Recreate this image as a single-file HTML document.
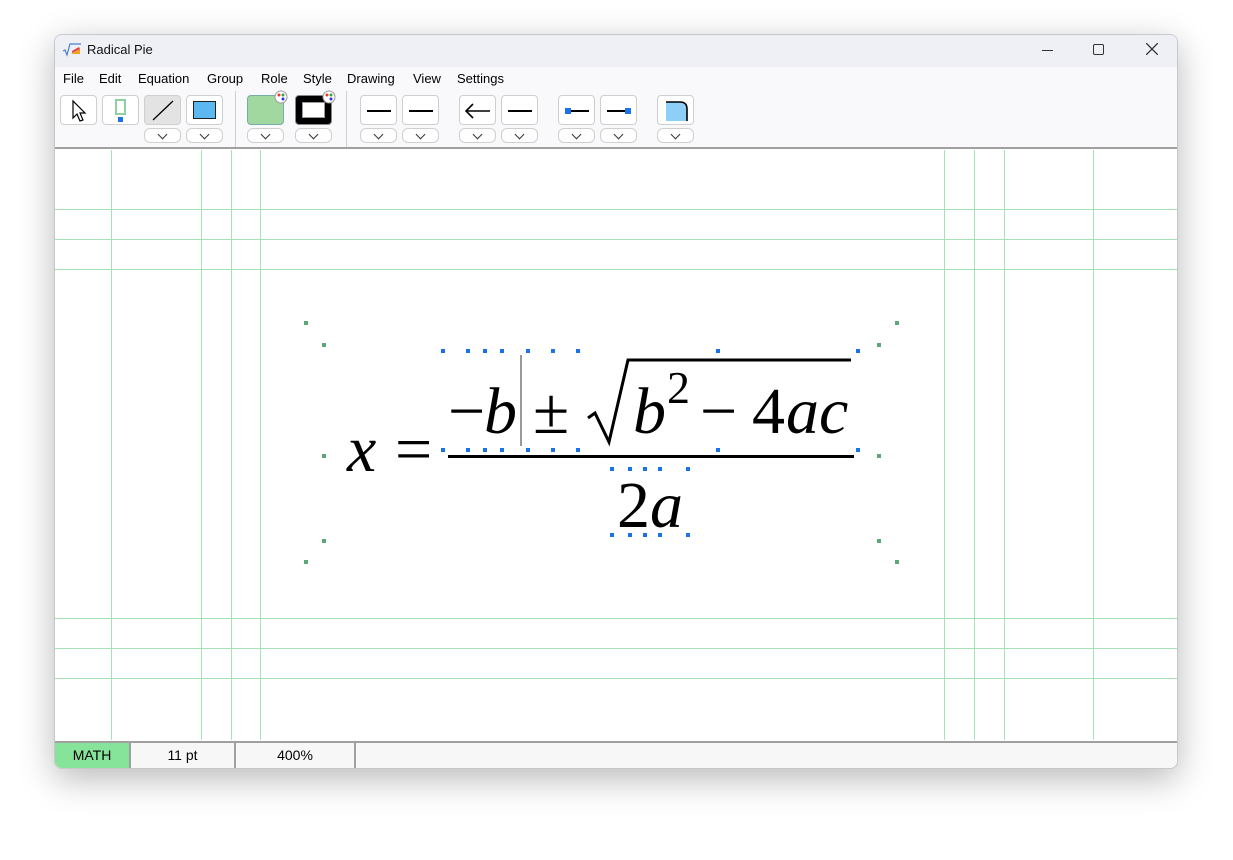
<!DOCTYPE html>
<html><head><meta charset="utf-8"><style>
*{margin:0;padding:0;box-sizing:border-box}
body{width:1233px;height:860px;background:#fff;position:relative;overflow:hidden;font-family:"Liberation Sans",sans-serif}
.win{position:absolute;left:54px;top:34px;width:1124px;height:735px;border:1px solid #c8c8c8;border-radius:8px;background:#fff;box-shadow:0 10px 35px rgba(0,0,0,.28);overflow:hidden}
.title{position:absolute;left:0;top:0;width:100%;height:32px;background:#eff0f6}
.menu{position:absolute;left:0;top:32px;width:100%;height:22px;background:#f9f9fb;font-size:13px}
.menu span{position:absolute;top:4px}
.tb{position:absolute;left:0;top:54px;width:100%;height:60px;background:#f9f9fb;border-bottom:2px solid #a0a0a0}
.b{position:absolute;top:6px;width:37px;height:30px;border:1px solid #cfcfcf;border-radius:4px;background:#fff}
.d{position:absolute;top:39px;width:37px;height:15px;border:1px solid #cfcfcf;border-radius:6px;background:#fff}
.d:after{content:"";position:absolute;left:14px;top:2px;width:6px;height:6px;border-right:1px solid #333;border-bottom:1px solid #333;transform:rotate(45deg)}
.sep{position:absolute;top:2px;width:1px;height:56px;background:#d0d0d0}
.status{position:absolute;left:0;top:706px;width:100%;height:28px;background:#f7f7f7;border-top:2px solid #a0a0a0;font-size:14px}
.status div{position:absolute;top:0;height:26px;line-height:25px;text-align:center;border-right:2px solid #a0a0a0}
</style></head><body>
<div class="win">
 <div class="title">
  <svg style="position:absolute;left:8px;top:8px" width="18" height="14"><path d="M0 8 L2 7 L4 12 L7 1 L18 1" stroke="#4a7fd0" fill="none" stroke-width="1.2"/><path d="M8 11 L17 6 L17 11 Z" fill="#f0a020"/><path d="M9 8 L16 4 L17 6 L9 10Z" fill="#e04040"/></svg>
  <span style="position:absolute;left:32px;top:7px;font-size:13px;color:#111">Radical Pie</span>
  <div style="position:absolute;left:987px;top:15px;width:11px;height:1px;background:#333"></div>
  <div style="position:absolute;left:1038px;top:9px;width:11px;height:11px;border:1.3px solid #333;border-radius:2px"></div>
  <svg style="position:absolute;left:1091px;top:8px" width="12" height="12"><path d="M0 0L12 12M12 0L0 12" stroke="#333" stroke-width="1.3"/></svg>
 </div>
 <div class="menu">
  <span style="left:8px">File</span><span style="left:44px">Edit</span><span style="left:83px">Equation</span><span style="left:152px">Group</span><span style="left:206px">Role</span><span style="left:248px">Style</span><span style="left:292px">Drawing</span><span style="left:358px">View</span><span style="left:402px">Settings</span>
 </div>
 <div class="tb">
  <div class="b" style="left:5px"><svg width="37" height="30"><path d="M12 5 L12 22 L16 18 L19 25 L22 24 L19 17 L24 17 Z" fill="#fff" stroke="#000" stroke-width="1.2"/></svg></div>
  <div class="b" style="left:47px"><div style="position:absolute;left:12px;top:3px;width:11px;height:16px;border:2px solid #8fd0a0"></div><div style="position:absolute;left:15px;top:21px;width:5px;height:5px;background:#1a73e8"></div></div>
  <div class="b" style="left:89px;background:#e3e3e3"><svg width="37" height="30"><path d="M8 24 L28 5" stroke="#000" stroke-width="1.3"/></svg></div>
  <div class="b" style="left:131px"><div style="position:absolute;left:6px;top:5px;width:23px;height:18px;background:#5bb8f0;border:1.5px solid #222"></div></div>
  <div class="d" style="left:89px"></div><div class="d" style="left:131px"></div>
  <div class="sep" style="left:180px"></div>
  <div class="b" style="left:192px;background:#a0d8a0;border-color:#7aa"></div>
  <div class="b" style="left:240px;background:#000;border-color:#888"><div style="position:absolute;left:6px;top:6px;width:23px;height:16px;background:#fff;border:1px solid #999"></div></div>
  <svg style="position:absolute;left:219px;top:1px" width="14" height="14"><circle cx="7" cy="7" r="6" fill="#fff" stroke="#999"/><circle cx="5" cy="5" r="1.5" fill="#e33"/><circle cx="9" cy="5" r="1.5" fill="#3a3"/><circle cx="9" cy="9" r="1.5" fill="#33e"/></svg>
  <svg style="position:absolute;left:267px;top:1px" width="14" height="14"><circle cx="7" cy="7" r="6" fill="#fff" stroke="#999"/><circle cx="5" cy="5" r="1.5" fill="#e33"/><circle cx="9" cy="5" r="1.5" fill="#3a3"/><circle cx="9" cy="9" r="1.5" fill="#33e"/></svg>
  <div class="d" style="left:192px"></div><div class="d" style="left:240px"></div>
  <div class="sep" style="left:291px"></div>
  <div class="b" style="left:305px"><div style="position:absolute;left:6px;top:14px;width:24px;height:2px;background:#000"></div></div>
  <div class="b" style="left:347px"><div style="position:absolute;left:6px;top:14px;width:24px;height:2px;background:#000"></div></div>
  <div class="b" style="left:404px"><svg width="37" height="30"><path d="M6 15 L30 15 M13 8 L6 15 L13 22" stroke="#000" stroke-width="1.6" fill="none"/></svg></div>
  <div class="b" style="left:446px"><div style="position:absolute;left:6px;top:14px;width:24px;height:2px;background:#000"></div></div>
  <div class="b" style="left:503px"><div style="position:absolute;left:6px;top:14px;width:24px;height:2px;background:#000"></div><div style="position:absolute;left:6px;top:12px;width:6px;height:6px;background:#1a73e8"></div></div>
  <div class="b" style="left:545px"><div style="position:absolute;left:6px;top:14px;width:24px;height:2px;background:#000"></div><div style="position:absolute;left:24px;top:12px;width:6px;height:6px;background:#1a73e8"></div></div>
  <div class="b" style="left:602px"><svg width="37" height="30"><path d="M8 6 L22 6 Q29 6 29 13 L29 25 L8 25 Z" fill="#8ecff8"/><path d="M8 6 L22 6 Q29 6 29 13 L29 25" fill="none" stroke="#000" stroke-width="1.6"/></svg></div>
  <div class="d" style="left:305px"></div><div class="d" style="left:347px"></div><div class="d" style="left:404px"></div><div class="d" style="left:446px"></div><div class="d" style="left:503px"></div><div class="d" style="left:545px"></div><div class="d" style="left:602px"></div>
 </div>
 <div class="status">
  <div style="left:0;width:76px;background:#86e49a">MATH</div>
  <div style="left:76px;width:105px">11 pt</div>
  <div style="left:181px;width:120px">400%</div>
 </div>
</div>
<svg style="position:absolute;left:0;top:0" width="1233" height="860">
 <g stroke="#a6e2b8" stroke-width="1">
  <path d="M111.5 150V740M201.5 150V740M231.5 150V740M260.5 150V740M944.5 150V740M974.5 150V740M1004.5 150V740M1093.5 150V740"/>
  <path d="M55 209.5H1177M55 239.5H1177M55 269.5H1177M55 618.5H1177M55 648.5H1177M55 678.5H1177"/>
 </g>
 <g fill="#5aa878">
  <rect x="304" y="321" width="4" height="4"/><rect x="322" y="343" width="4" height="4"/><rect x="322" y="454" width="4" height="4"/><rect x="322" y="539" width="4" height="4"/><rect x="304" y="560" width="4" height="4"/>
  <rect x="895" y="321" width="4" height="4"/><rect x="877" y="343" width="4" height="4"/><rect x="877" y="454" width="4" height="4"/><rect x="877" y="539" width="4" height="4"/><rect x="895" y="560" width="4" height="4"/>
 </g>
 <g fill="#1a73e8">
  <g id="r1"><rect x="441" y="349" width="4" height="4"/><rect x="466" y="349" width="4" height="4"/><rect x="483" y="349" width="4" height="4"/><rect x="500" y="349" width="4" height="4"/><rect x="526" y="349" width="4" height="4"/><rect x="551" y="349" width="4" height="4"/><rect x="576" y="349" width="4" height="4"/><rect x="716" y="349" width="4" height="4"/><rect x="856" y="349" width="4" height="4"/></g>
  <use href="#r1" y="99"/>
  <g id="r2"><rect x="610" y="467" width="4" height="4"/><rect x="628" y="467" width="4" height="4"/><rect x="643" y="467" width="4" height="4"/><rect x="658" y="467" width="4" height="4"/><rect x="686" y="467" width="4" height="4"/></g>
  <use href="#r2" y="66"/>
 </g>
 <rect x="520" y="355" width="2" height="91" fill="#999"/>
 <g font-family="Liberation Serif, serif" font-size="66" fill="#000">
  <text x="347" y="471" font-style="italic">x</text>
  <text x="395" y="471">=</text>
  <text x="448" y="433">−</text>
  <text x="484" y="433" font-style="italic">b</text>
  <text x="533" y="433">±</text>
  <text x="633" y="433" font-style="italic">b</text>
  <text x="667" y="403" font-size="46">2</text>
  <text x="700" y="433">−</text>
  <text x="752" y="433">4</text>
  <text x="786" y="433" font-style="italic">ac</text>
  <text x="617" y="527">2</text>
  <text x="650" y="527" font-style="italic">a</text>
 </g>
 <path d="M588 418 L595 413 L609 442 L628 360 L851 360" stroke="#000" stroke-width="3" fill="none"/>
 <rect x="448" y="455" width="406" height="3" fill="#000"/>
</svg>
</body></html>
